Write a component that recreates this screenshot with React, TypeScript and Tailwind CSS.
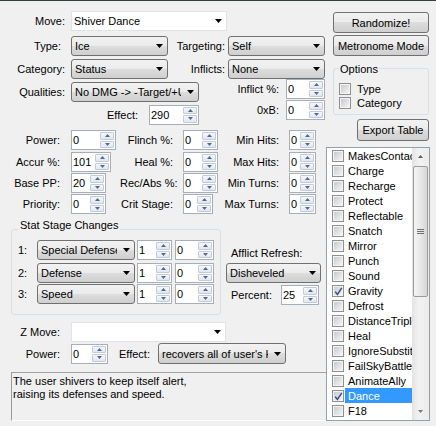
import React from "react";

const GRAD = "bg-[linear-gradient(#f2f2f2,#ebebeb_50%,#dddddd_50%,#cfcfcf)]";

function DropArrow() {
  return (
    <svg width="7" height="4" viewBox="0 0 7 4" className="shrink-0">
      <path d="M0 0H7L3.5 4Z" fill="#000" />
    </svg>
  );
}

function Combo({ text, className = "" }: { text: string; className?: string }) {
  return (
    <div className={`flex items-center rounded-[3px] border border-[#707070] ${GRAD} pl-[3px] pr-[4px] ${className}`}>
      <span className="mr-[6px] flex-1 overflow-hidden whitespace-nowrap">{text}</span>
      <DropArrow />
    </div>
  );
}

function EditCombo({ text, className = "" }: { text: string; className?: string }) {
  return (
    <div className={`flex items-center border border-[#dfe2e8] bg-white pl-[2px] pr-[4px] ${className}`}>
      <span className="mr-[6px] flex-1 overflow-hidden whitespace-nowrap">{text}</span>
      <DropArrow />
    </div>
  );
}

function SpinBtn({ up }: { up?: boolean }) {
  return (
    <div className="flex flex-1 items-center justify-center rounded-[1px] border border-[#c3cbd6] bg-[linear-gradient(#f6f8fa,#e2e7ee)]">
      <svg width="5" height="3" viewBox="0 0 5 3">
        <path d={up ? "M0 3H5L2.5 0Z" : "M0 0H5L2.5 3Z"} fill="#4a6a9c" />
      </svg>
    </div>
  );
}

function Num({ value, className = "" }: { value: string; className?: string }) {
  return (
    <div className={`flex h-[20px] border border-[#a7aeb8] bg-white ${className}`}>
      <span className="flex-1 overflow-hidden whitespace-nowrap pl-[1px] leading-[18px]">{value}</span>
      <div className="flex w-[15px] flex-col gap-[1px] py-[1px] pr-[1px]">
        <SpinBtn up />
        <SpinBtn />
      </div>
    </div>
  );
}

function Check({ checked }: { checked?: boolean }) {
  return (
    <div className="relative h-[12px] w-[12px] shrink-0 border border-[#8e8f8f] bg-[#f4f4f4] p-[1px]">
      <div className="h-full w-full bg-[linear-gradient(135deg,#c9cbcf,#f3f3f3)]" />
      {checked && (
        <svg className="absolute left-[1px] top-[1px]" width="9" height="9" viewBox="0 0 9 9">
          <path d="M1.2 4.6 L3.4 7.4 L7.8 0.8" stroke="#3d4f8c" strokeWidth="1.5" fill="none" />
        </svg>
      )}
    </div>
  );
}

function Btn({ children, className = "" }: { children: React.ReactNode; className?: string }) {
  return (
    <div className={`flex items-center justify-center rounded-[3px] border border-[#707070] ${GRAD} ${className}`}>
      {children}
    </div>
  );
}

const flags = [
  "MakesContact",
  "Charge",
  "Recharge",
  "Protect",
  "Reflectable",
  "Snatch",
  "Mirror",
  "Punch",
  "Sound",
  "Gravity",
  "Defrost",
  "DistanceTriple",
  "Heal",
  "IgnoreSubstitute",
  "FailSkyBattle",
  "AnimateAlly",
  "Dance",
  "F18",
];
const checkedFlags = ["Gravity", "Dance"];

function StatRow({ n, stat }: { n: string; stat: string }) {
  return (
    <div className="flex h-[20px] items-center">
      <div className="w-[25px] pl-[6px]">{n}</div>
      <Combo text={stat} className="h-[20px] w-[98px]" />
      <Num value="1" className="ml-[2px] w-[35px]" />
      <Num value="0" className="ml-[3px] w-[39px]" />
    </div>
  );
}

function GridRow({
  a,
  av,
  aw,
  b,
  bv,
  bw,
  c,
  cls,
}: {
  a: string;
  av: string;
  aw: string;
  b: string;
  bv: string;
  bw: string;
  c: string;
  cls: string;
}) {
  return (
    <div className={`flex h-[20px] items-center ${cls}`}>
      <div className="flex w-[120px] items-center">
        <div className="w-[71px] pr-[11px] text-right">{a}</div>
        <Num value={av} className={aw} />
      </div>
      <div className="flex w-[98px] items-center">
        <div className="w-[63px] pr-[10px] text-right">{b}</div>
        <Num value={bv} className={bw} />
      </div>
      <div className="flex items-center">
        <div className="w-[71px] pr-[10px] text-right">{c}</div>
        <Num value="0" className="w-[27px]" />
      </div>
    </div>
  );
}

export default function App() {
  return (
    <div className="h-[426px] w-[436px] overflow-hidden whitespace-nowrap bg-[#f0f0f0] font-['Liberation_Sans',Arial,sans-serif] text-[11px] leading-[14px] text-black">
      <div className="h-[1px] bg-[#33403a]" />
      <div className="flex">
        {/* Left column */}
        <div className="flex w-[326px] flex-col">
          <div className="mt-[10px] flex h-[20px] items-center">
            <div className="w-[71px] pr-[6px] text-right">Move:</div>
            <EditCombo text="Shiver Dance" className="h-[20px] w-[156px]" />
          </div>
          <div className="mt-[5px] flex h-[20px] items-center">
            <div className="w-[71px] pr-[10px] text-right">Type:</div>
            <Combo text="Ice" className="h-[20px] w-[97px]" />
            <div className="w-[60px] pr-[3px] text-right">Targeting:</div>
            <Combo text="Self" className="h-[20px] w-[97px]" />
          </div>
          <div className="mt-[3px] flex h-[20px] items-center">
            <div className="w-[71px] pr-[6px] text-right">Category:</div>
            <Combo text="Status" className="h-[20px] w-[97px]" />
            <div className="w-[60px] pr-[3px] text-right">Inflicts:</div>
            <Combo text="None" className="h-[20px] w-[97px]" />
          </div>
          <div className="flex items-start">
            <div className="flex w-[199px] flex-col">
              <div className="mt-[3px] flex h-[20px] items-center">
                <div className="w-[71px] pr-[6px] text-right">Qualities:</div>
                <Combo text="No DMG -> -Target/+User" className="h-[20px] w-[128px]" />
              </div>
              <div className="mt-[3px] flex h-[19px] items-center">
                <div className="w-[149px] pr-[11px] text-right">Effect:</div>
                <Num value="290" className="h-[19px] w-[50px]" />
              </div>
            </div>
            <div className="flex flex-1 flex-col">
              <div className="flex h-[20px] items-center">
                <div className="w-[87px] pr-[7px] text-right">Inflict %:</div>
                <Num value="0" className="w-[39px]" />
              </div>
              <div className="mt-[1px] flex h-[20px] items-center">
                <div className="w-[87px] pr-[7px] text-right">0xB:</div>
                <Num value="0" className="w-[39px]" />
              </div>
            </div>
          </div>

          <GridRow cls="mt-[6px]" a="Power:" av="0" aw="w-[45px]" b="Flinch %:" bv="0" bw="w-[35px]" c="Min Hits:" />
          <GridRow cls="mt-[2px]" a="Accur %:" av="101" aw="w-[40px]" b="Heal %:" bv="0" bw="w-[35px]" c="Max Hits:" />
          <GridRow cls="mt-[1px]" a="Base PP:" av="20" aw="w-[35px]" b="Rec/Abs %:" bv="0" bw="w-[35px]" c="Min Turns:" />
          <GridRow cls="mt-[1px]" a="Priority:" av="0" aw="w-[35px]" b="Crit Stage:" bv="0" bw="w-[30px]" c="Max Turns:" />

          <div className="mt-[15px] flex items-start">
            <div className="relative ml-[11px] h-[86px] w-[210px] rounded-[3px] border border-[#d5dfe5] pt-[10px]">
              <span className="absolute left-[6px] top-[-12px] bg-[#f0f0f0] px-[2px]">Stat Stage Changes</span>
              <StatRow n="1:" stat="Special Defense" />
              <div className="mt-[3px]">
                <StatRow n="2:" stat="Defense" />
              </div>
              <div className="mt-[1px]">
                <StatRow n="3:" stat="Speed" />
              </div>
            </div>
            <div className="ml-[5px] flex w-[95px] flex-col">
              <div className="mt-[14px] flex h-[20px] items-center pl-[5px]">Afflict Refresh:</div>
              <Combo text="Disheveled" className="h-[20px] w-[95px]" />
              <div className="mt-[2px] flex h-[20px] items-center">
                <div className="w-[55px] pl-[5px]">Percent:</div>
                <Num value="25" className="w-[38px]" />
              </div>
            </div>
          </div>

          <div className="mt-[7px] flex h-[20px] items-center">
            <div className="w-[71px] pr-[11px] text-right">Z Move:</div>
            <EditCombo text="" className="h-[20px] w-[155px]" />
          </div>
          <div className="mt-[1px] flex h-[21px] items-center">
            <div className="w-[71px] pr-[11px] text-right">Power:</div>
            <Num value="0" className="w-[37px]" />
            <div className="ml-[11px] w-[39px]">Effect:</div>
            <Combo text="recovers all of user's HP" className="h-[21px] w-[128px]" />
          </div>
          <div className="ml-[11px] mt-[8px] h-[49px] w-[315px] border-b border-l border-t border-b-white border-l-[#9a9a9a] border-t-[#a0a0a0] pl-[1px] pt-[2px] leading-[13px]">
            The user shivers to keep itself alert,
            <br />
            raising its defenses and speed.
          </div>
        </div>

        {/* Right column */}
        <div className="flex w-[110px] flex-col">
          <Btn className="ml-[7px] mt-[11px] h-[21px] w-[96px]">Randomize!</Btn>
          <Btn className="ml-[7px] mt-[2px] h-[21px] w-[96px]">Metronome Mode</Btn>
          <div className="relative ml-[7px] mt-[12px] h-[47px] w-[96px] rounded-[3px] border border-[#d5dfe5] pl-[5px] pt-[13px]">
            <span className="absolute left-[5px] top-[-7px] bg-[#f0f0f0] px-[1px]">Options</span>
            <div className="flex h-[14px] items-center gap-[6px]">
              <Check />
              <span>Type</span>
            </div>
            <div className="flex h-[14px] items-center gap-[6px]">
              <Check />
              <span>Category</span>
            </div>
          </div>
          <Btn className="ml-[31px] mt-[4px] h-[22px] w-[72px]">Export Table</Btn>
          <div className="mt-[6px] flex h-[274px] w-[104px] border border-[#9a9ea6] bg-white">
            <div className="flex w-[85px] flex-col">
              {flags.map((f) => {
                const sel = f === "Dance";
                return (
                  <div key={f} className="flex h-[15px] items-center pl-[5px]">
                    <Check checked={checkedFlags.includes(f)} />
                    <div
                      className={`ml-[1px] flex h-full flex-1 items-center overflow-hidden whitespace-nowrap pl-[3px] ${
                        sel ? "bg-[#3399ff] text-white" : ""
                      }`}
                    >
                      {f}
                    </div>
                  </div>
                );
              })}
            </div>
            <div className="flex w-[17px] flex-col bg-[linear-gradient(90deg,#e3e3e3,#f2f2f2_40%,#ececec)]">
              <div className="flex h-[17px] items-center justify-center">
                <svg width="5" height="3" viewBox="0 0 5 3">
                  <path d="M0 3H5L2.5 0Z" fill="#5c5c5c" />
                </svg>
              </div>
              <div className="mx-[1px] mt-[1px] flex h-[131px] items-center justify-center rounded-[2px] border border-[#9b9b9b] bg-[linear-gradient(90deg,#f5f5f5,#e8e8e8_50%,#d6d6d6)]">
                <div className="flex flex-col gap-[1px]">
                  <div className="h-[1px] w-[7px] bg-[#707070]" />
                  <div className="h-[1px] w-[7px] bg-[#707070]" />
                  <div className="h-[1px] w-[7px] bg-[#707070]" />
                </div>
              </div>
              <div className="flex-1" />
              <div className="flex h-[17px] items-center justify-center">
                <svg width="5" height="3" viewBox="0 0 5 3">
                  <path d="M0 0H5L2.5 3Z" fill="#7a7a7a" />
                </svg>
              </div>
            </div>
          </div>
        </div>
      </div>
    </div>
  );
}
